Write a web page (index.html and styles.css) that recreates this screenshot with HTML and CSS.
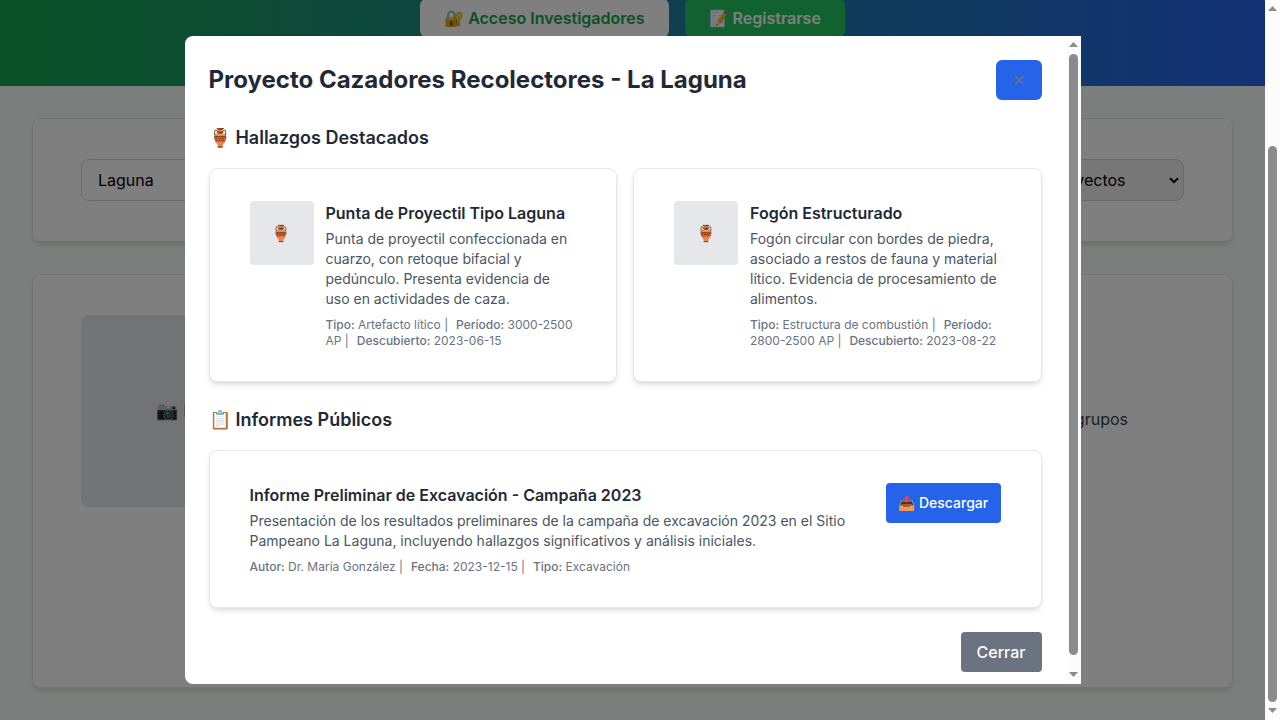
FILE: index.html
```html
<!DOCTYPE html>
<html lang="es">
<head>
<meta charset="utf-8">
<title>Proyecto Cazadores Recolectores</title>
<link rel="stylesheet" href="styles.css">
</head>
<body>
<div class="viewport">
  <div class="page">
    <header class="hero">
      <div class="hero-actions">
        <button class="hero-btn hero-btn-light">🔐 Acceso Investigadores</button>
        <button class="hero-btn hero-btn-green">📝 Registrarse</button>
      </div>
    </header>
    <main class="content">
      <section class="card filters">
        <div class="search">Laguna</div>
        <div class="select"><span>Todos los proyectos</span>
          <svg class="chevron" width="10" height="7" viewBox="0 0 10 7"><path d="M1 1.2 5 5.2 9 1.2" fill="none" stroke="#000" stroke-width="2"/></svg>
        </div>
      </section>
      <section class="card project">
        <div class="photo"><span class="photo-icon">📷</span>Imagen</div>
        <p class="project-text">Estudio de los grupos</p>
      </section>
    </main>
  </div>
  <div class="scrollbar page-scroll"><i class="arrow-up"></i><i class="thumb"></i><i class="arrow-down"></i></div>

  <div class="overlay">
    <div class="modal">
      <div class="modal-body">
        <div class="modal-head">
          <h2>Proyecto Cazadores Recolectores - La Laguna</h2>
          <button class="close">✕</button>
        </div>
        <h3><span class="emoji">🏺</span> Hallazgos Destacados</h3>
        <div class="findings">
          <article class="card finding">
            <div class="thumbnail">🏺</div>
            <div class="info">
              <h4>Punta de Proyectil Tipo Laguna</h4>
              <p class="desc">Punta de proyectil confeccionada en cuarzo, con retoque bifacial y pedúnculo. Presenta evidencia de uso en actividades de caza.</p>
              <p class="meta"><b>Tipo:</b> Artefacto lítico | <b>Período:</b> 3000-2500 AP | <b>Descubierto:</b> 2023-06-15</p>
            </div>
          </article>
          <article class="card finding">
            <div class="thumbnail">🏺</div>
            <div class="info">
              <h4>Fogón Estructurado</h4>
              <p class="desc">Fogón circular con bordes de piedra, asociado a restos de fauna y material lítico. Evidencia de procesamiento de alimentos.</p>
              <p class="meta"><b>Tipo:</b> Estructura de combustión | <b>Período:</b> 2800-2500 AP | <b>Descubierto:</b> 2023-08-22</p>
            </div>
          </article>
        </div>
        <h3><span class="emoji">📋</span> Informes Públicos</h3>
        <article class="card report">
          <div class="info">
            <h4>Informe Preliminar de Excavación - Campaña 2023</h4>
            <p class="desc">Presentación de los resultados preliminares de la campaña de excavación 2023 en el Sitio Pampeano La Laguna, incluyendo hallazgos significativos y análisis iniciales.</p>
            <p class="meta"><b>Autor:</b> Dr. María González | <b>Fecha:</b> 2023-12-15 | <b>Tipo:</b> Excavación</p>
          </div>
          <button class="download"><span class="emoji">📥</span> Descargar</button>
        </article>
        <div class="modal-foot"><button class="dismiss">Cerrar</button></div>
      </div>
      <div class="scrollbar modal-scroll"><i class="arrow-up"></i><i class="thumb"></i><i class="arrow-down"></i></div>
    </div>
  </div>
</div>
</body>
</html>
```
FILE: styles.css
```css
* { box-sizing: border-box; margin: 0; padding: 0; }
html, body { height: 100%; overflow: hidden; }
body { font-family: Inter, "Noto Sans", sans-serif; font-size: 16px; line-height: 24px; color: #1f2937; }
button { font: inherit; border: 0; }
.viewport { position: relative; display: flex; width: 1280px; height: 720px; overflow: hidden; }
.page { width: 1265px; height: 720px; background: #f9fdfa; }
.hero { height: 86px; background: linear-gradient(90deg, #16a34a, #2563eb); }
.hero-actions { display: flex; justify-content: center; gap: 16px; }
.hero-btn { height: 40px; margin-top: -2px; padding: 0 24px; border-radius: 8px; font-weight: 600; white-space: nowrap; }
.hero-btn-light { background: #fff; color: #16a34a; }
.hero-btn-green { background: #22c55e; color: #fff; }
.card { background: #fff; border: 1px solid #e5e7eb; border-radius: 8px; box-shadow: 0 4px 6px -1px rgba(0,0,0,.1), 0 2px 4px -2px rgba(0,0,0,.1); }
.content { display: flex; flex-direction: column; gap: 32px; padding: 32px; }
.filters { display: flex; justify-content: space-between; height: 124px; padding: 40px 48px; }
.search, .select { height: 42px; padding: 8px 16px; border: 1px solid #d1d5db; border-radius: 8px; color: #000; }
.search { width: 840px; }
.select { display: flex; align-items: center; justify-content: space-between; width: 228px; padding-right: 4px; background: #efefef; }
.project { display: flex; justify-content: space-between; height: 414px; padding: 40px 48px; }
.photo { display: flex; align-items: center; width: 256px; height: 192px; padding-left: 75px; border-radius: 8px; background: #e5e7eb; color: #6b7280; font-size: 18px; }
.photo-icon { margin-right: 5px; }
.project-text { padding: 92px 56px 0 0; color: #374151; }
.overlay { position: absolute; inset: 0 15px 0 0; display: flex; align-items: center; justify-content: center; background: rgba(0,0,0,.5); }
.modal { display: flex; width: 896px; height: 648px; border-radius: 8px 0 0 8px; background: #fff; overflow: hidden; }
.modal-body { flex: 1; min-width: 0; padding: 24px; }
.modal-head { display: flex; align-items: center; justify-content: space-between; height: 40px; margin-bottom: 24px; }
h2 { font-size: 24px; line-height: 32px; font-weight: 700; }
.close { width: 46px; height: 40px; border-radius: 6px; background: #2563eb; color: #6b7280; }
h3 { margin-bottom: 16px; font-size: 18px; line-height: 28px; font-weight: 600; }
.emoji { margin-right: .4px; }
.findings { display: grid; grid-template-columns: 1fr 1fr; gap: 16px; margin-bottom: 24px; }
.finding { display: flex; gap: 12px; height: 214px; padding: 32px 40px; }
.thumbnail { display: flex; flex: none; align-items: center; justify-content: center; width: 64px; height: 64px; padding-right: .5px; border-radius: 4px; background: #e5e7eb; }
.info { flex: 1; min-width: 0; }
h4 { margin-bottom: 4px; font-size: 16px; line-height: 24px; font-weight: 600; }
.desc { margin-bottom: 8px; font-size: 14px; line-height: 20px; color: #4b5563; }
.meta { font-size: 12px; line-height: 16px; color: #6b7280; }
.meta b { font-weight: 500; }
.meta b + b { margin-left: 4.6px; }
.report { display: flex; gap: 16px; height: 158px; padding: 32px 40px; }
.download { flex: none; width: 115px; height: 40px; border-radius: 4px; background: #2563eb; color: #fff; font-size: 14px; font-weight: 500; }
.modal-foot { display: flex; justify-content: flex-end; margin-top: 24px; }
.dismiss { width: 81px; height: 40px; border-radius: 4px; background: #6b7280; color: #fff; font-weight: 500; }
.scrollbar { display: flex; flex: none; flex-direction: column; align-items: center; width: 15px; height: 100%; background: #fcfcfc; }
.thumb { width: 9px; border-radius: 5px; background: #8b8b8b; }
.arrow-up, .arrow-down { width: 9px; height: 5px; background: #8b8b8b; }
.arrow-up { clip-path: polygon(50% 0, 100% 100%, 0 100%); }
.arrow-down { clip-path: polygon(0 0, 100% 0, 50% 100%); }
.page-scroll { padding-top: 6px; }
.page-scroll .thumb { height: 556px; margin: 135px 0 6px; }
.modal-scroll { padding: 6px 0 0 1px; }
.modal-scroll .thumb { height: 601px; margin: 7px 0 17px; }
```
